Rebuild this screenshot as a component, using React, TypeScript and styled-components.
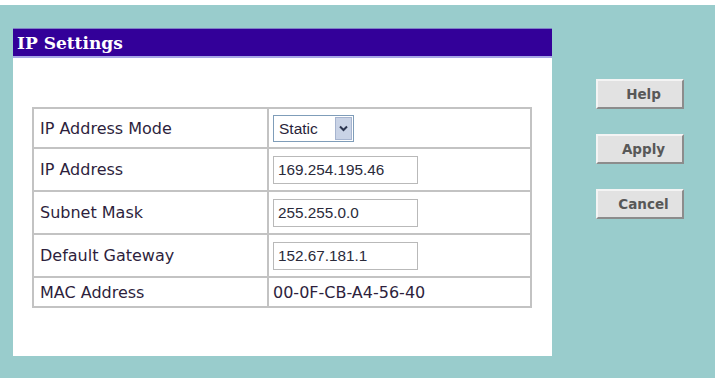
import { createGlobalStyle } from 'styled-components';
import styled from 'styled-components';

const GlobalStyle = createGlobalStyle`
  html, body {
    margin: 0;
    padding: 0;
    background: #ffffff;
  }
  body {
    font-family: "DejaVu Sans", Verdana, sans-serif;
  }
`;

const Page = styled.div`
  margin-top: 5px;
  height: 373px;
  background: #99cccc;
  display: flex;
  align-items: flex-start;
  padding: 23px 0 0 13px;
  box-sizing: border-box;
`;

const Panel = styled.div`
  width: 539px;
  background: #ffffff;
`;

const TitleBar = styled.div`
  height: 27px;
  background: #330099;
  border-top: 1px solid #7f7fc6;
  border-bottom: 2px solid #a6a6e6;
  padding-left: 4px;
  display: flex;
  align-items: center;
`;

const Title = styled.h1`
  margin: 0;
  font-family: "DejaVu Serif", "Liberation Serif", serif;
  font-weight: bold;
  font-size: 17px;
  color: #ffffff;
`;

const Body = styled.div`
  padding: 49px 20px 48px 19px;
`;

const Table = styled.table`
  width: 500px;
  table-layout: fixed;
  border-collapse: collapse;
  border: 2px solid #c3c3c3;
`;

const Row = styled.tr<{ $h: number }>`
  height: ${p => p.$h}px;
`;

const LabelCell = styled.td`
  width: 221px;
  border: 2px solid #c3c3c3;
  padding: 0 6px;
  font-size: 16px;
  color: #2e1f3d;
  vertical-align: middle;
`;

const ValueCell = styled.td`
  border: 2px solid #c3c3c3;
  padding: 0 4px;
  font-size: 16px;
  color: #2e1f3d;
  vertical-align: middle;
`;

const SelectWrap = styled.div`
  position: relative;
  width: 81px;
  height: 27px;
`;

const Select = styled.select`
  appearance: none;
  width: 81px;
  height: 27px;
  box-sizing: border-box;
  border: 1px solid #7f9db9;
  background: #ffffff;
  font-family: "Liberation Sans", Arial, sans-serif;
  font-size: 15.5px;
  color: #2a1f3a;
  padding: 0 0 0 5px;
  margin: 0;
  display: block;
`;

const Arrow = styled.span`
  position: absolute;
  top: 2px;
  right: 2px;
  width: 17px;
  height: 23px;
  background: #c9d3e6;
  border: 1px solid #a6b4cf;
  box-sizing: border-box;
  display: flex;
  align-items: center;
  justify-content: center;
  pointer-events: none;
`;

const TextInput = styled.input`
  width: 145px;
  height: 28px;
  box-sizing: border-box;
  border: 1px solid #b9b9b9;
  font-family: "Liberation Sans", Arial, sans-serif;
  font-size: 15.3px;
  color: #2a2a3a;
  padding: 0 0 0 4px;
  margin: 0;
  display: block;
`;

const Buttons = styled.div`
  margin: 51px 0 0 44px;
  display: flex;
  flex-direction: column;
  gap: 25px;
`;

const Button = styled.button`
  width: 88px;
  height: 30px;
  box-sizing: border-box;
  background: #e2e2e2;
  border-style: solid;
  border-width: 2px;
  border-color: #f4f4f4 #8c8c8c #8c8c8c #f4f4f4;
  font-family: "DejaVu Sans", Verdana, sans-serif;
  font-weight: bold;
  font-size: 13.5px;
  color: #585858;
  padding: 0 0 0 7px;
  cursor: pointer;
`;

const rows = [
  { label: 'IP Address Mode', kind: 'select', value: 'Static', h: 40 },
  { label: 'IP Address', kind: 'input', value: '169.254.195.46', h: 43 },
  { label: 'Subnet Mask', kind: 'input', value: '255.255.0.0', h: 43 },
  { label: 'Default Gateway', kind: 'input', value: '152.67.181.1', h: 43 },
  { label: 'MAC Address', kind: 'text', value: '00-0F-CB-A4-56-40', h: 30 },
];

const App = () => {
  return (
    <>
      <GlobalStyle />
      <Page>
        <Panel>
          <TitleBar>
            <Title>IP Settings</Title>
          </TitleBar>
          <Body>
            <Table>
              <tbody>
                {rows.map(row => (
                  <Row $h={row.h} key={row.label}>
                    <LabelCell>{row.label}</LabelCell>
                    <ValueCell>
                      {row.kind === 'select' && (
                        <SelectWrap>
                          <Select defaultValue="Static">
                            <option value="Static">Static</option>
                            <option value="DHCP">DHCP</option>
                          </Select>
                          <Arrow>
                            <svg width="9" height="7" viewBox="0 0 9 7">
                              <path d="M1 1.5 L4.5 5 L8 1.5" fill="none" stroke="#2b3550" strokeWidth="2" />
                            </svg>
                          </Arrow>
                        </SelectWrap>
                      )}
                      {row.kind === 'input' && <TextInput defaultValue={row.value} />}
                      {row.kind === 'text' && row.value}
                    </ValueCell>
                  </Row>
                ))}
              </tbody>
            </Table>
          </Body>
        </Panel>
        <Buttons>
          <Button>Help</Button>
          <Button>Apply</Button>
          <Button>Cancel</Button>
        </Buttons>
      </Page>
    </>
  );
};

export default App;
